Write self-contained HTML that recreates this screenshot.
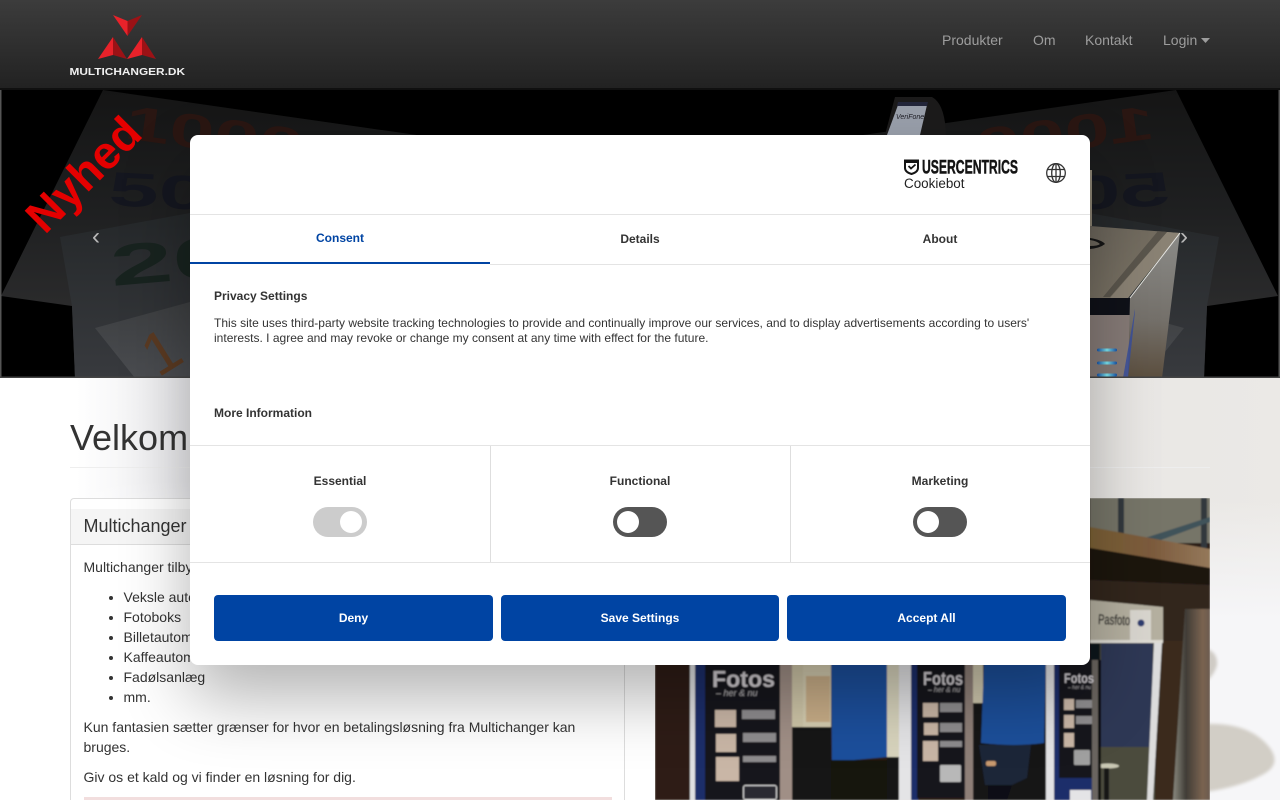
<!DOCTYPE html>
<html lang="da"><head><meta charset="utf-8"><title>Multichanger</title>
<style>
*{box-sizing:border-box}
html,body{margin:0;padding:0;width:1280px;height:800px;overflow:hidden;background:#fff;font-family:"Liberation Sans",sans-serif;color:#333;font-size:14px;line-height:20px}
body{position:relative}
.abs,svg.abs{position:absolute}
#nav{position:absolute;left:0;top:0;width:1280px;height:90px;background:linear-gradient(#3c3c3c,#222);border-bottom:2px solid #101010}
#nav a{position:absolute;top:30px;color:#9d9d9d;text-decoration:none}
.panel{position:absolute;left:70px;top:498px;width:555px;height:302px;background:#fff;border:1px solid #ddd;border-bottom:0;border-radius:4px 4px 0 0;overflow:hidden}
.ph{position:absolute;left:0;top:10px;width:553px;height:36px;background:#f5f5f5;border-bottom:1px solid #ddd;padding:7px 12.5px;font-size:18px;white-space:nowrap}
.pb{position:absolute;left:12.5px;top:58px;width:510px}
.pb p{margin:0 0 10px}.pb ul{margin:0 0 10px;padding-left:40px}
.alert{position:absolute;left:13px;top:298px;width:528px;height:3px;background:#f2dede}
#modal{position:absolute;left:190px;top:135px;width:900px;height:530px;background:#fff;border-radius:8px;box-shadow:0 32px 68px rgba(0,0,0,.3);color:#141414;font-size:12px;line-height:15px;overflow:hidden}
#modal div.h{position:absolute;background:#e4e4e4;height:1px}
#modal div.v{position:absolute;background:#dedede;width:1px}
.tab{position:absolute;top:80px;width:300px;height:49px;text-align:center;line-height:48px;font-weight:bold;color:#333}
.lab{position:absolute;top:339px;width:300px;text-align:center;font-weight:bold;color:#333}
.tg{position:absolute;top:372px;width:54px;height:30px;border-radius:15px;background:#555}
.tg i{position:absolute;top:4px;width:22px;height:22px;border-radius:50%;background:#fff}
.btn{position:absolute;top:460px;height:46px;background:#0044a3;color:#fff;border-radius:4px;text-align:center;line-height:46px;font-weight:bold}
</style></head><body>

<svg class="abs" style="left:0;top:378px" width="1280" height="422" viewBox="0 378 1280 422">
<defs>
<linearGradient id="bg" x1="0" x2="1" y1="0" y2="0"><stop offset="0" stop-color="#fff"/><stop offset=".06" stop-color="#fff"/><stop offset=".15" stop-color="#e9e9ec"/><stop offset=".7" stop-color="#e6e4e2"/><stop offset="1" stop-color="#ebe9e6"/></linearGradient>
<linearGradient id="fl" x1="0" x2="0" y1="0" y2="1"><stop offset="0" stop-color="#fff" stop-opacity="0"/><stop offset=".3" stop-color="#fff"/><stop offset="1" stop-color="#fff"/></linearGradient>
<linearGradient id="fr" x1="0" x2="0" y1="0" y2="1"><stop offset="0" stop-color="#f6f6f8" stop-opacity="0"/><stop offset=".4" stop-color="#f6f6f8"/><stop offset="1" stop-color="#f6f6f8"/></linearGradient>
<filter id="b3" x="-20%" y="-20%" width="140%" height="140%"><feGaussianBlur stdDeviation="1.5"/></filter>
<filter id="b1" x="-5%" y="-5%" width="110%" height="110%"><feGaussianBlur stdDeviation=".7"/></filter>
</defs>
<rect x="0" y="378" width="1280" height="422" fill="url(#bg)"/>
<rect x="0" y="480" width="655" height="320" fill="url(#fl)"/>
<rect x="1210" y="500" width="70" height="300" fill="url(#fr)"/>
<path d="M1205 724Q1250 722 1270 748Q1282 765 1262 775Q1240 787 1205 792Z" fill="#d2cec6" filter="url(#b3)"/>
<path d="M1205 648Q1218 652 1217 665Q1214 676 1205 682Z" fill="#cfcbc5" filter="url(#b3)"/>
</svg>

<div class="abs" style="left:70px;top:411px;width:1140px;height:57px;border-bottom:1px solid #eee;font-size:36px;line-height:54px;white-space:nowrap;overflow:hidden">Velkommen til Multichanger</div>

<div class="panel"><div class="ph">Multichanger tilbyder</div>
<div class="pb"><p>Multichanger tilbyder betalingsløsninger til</p>
<ul><li>Veksle automater</li><li>Fotoboks</li><li>Billetautomater</li><li>Kaffeautomater</li><li>Fadølsanlæg</li><li>mm.</li></ul>
<p>Kun fantasien sætter grænser for hvor en betalingsløsning fra Multichanger kan bruges.</p>
<p style="margin:0">Giv os et kald og vi finder en løsning for dig.</p></div>
<div class="alert"></div></div>

<svg class="abs" style="left:655px;top:498px" width="555" height="302" viewBox="655 498 555 302">
<defs>
<linearGradient id="beam" x1="0" x2="1" y1="0" y2="0"><stop offset="0" stop-color="#7d6236"/><stop offset=".5" stop-color="#7b5a3c"/><stop offset="1" stop-color="#94785a"/></linearGradient>
<linearGradient id="gl" x1="0" x2="1" y1="0" y2="0"><stop offset="0" stop-color="#8a8a80"/><stop offset=".35" stop-color="#403c36"/><stop offset=".8" stop-color="#7a6350"/><stop offset="1" stop-color="#6a5a50"/></linearGradient>
</defs>
<g filter="url(#b1)">
<rect x="655" y="498" width="555" height="302" fill="#2a1f18"/>
<rect x="1090" y="498" width="120" height="45" fill="#767468"/>
<rect x="1118" y="498" width="6" height="36" fill="#30383c"/>
<rect x="1201" y="498" width="6" height="50" fill="#30383c"/>
<path d="M1145 538L1210 517V522L1150 544Z" fill="#41525a"/>
<path d="M1090 527L1210 549V568L1090 548Z" fill="url(#beam)"/>
<path d="M1090 548L1210 568V585L1090 580Z" fill="#1e1511"/>
<path d="M1090 580L1210 585V800H1090Z" fill="#33251c"/>
<path d="M1090 600L1163 607V641L1090 640Z" fill="#b5b0a0"/>
<rect x="1130" y="610" width="21" height="30" fill="#d9d6cf"/>
<circle cx="1141" cy="623" r="3.500" fill="#2f3d70"/>
<text x="1098" y="624" font-size="14" fill="#1a1a1a" stroke="#1a1a1a" stroke-width=".3" transform="rotate(2 1098 624)" textLength="32" lengthAdjust="spacingAndGlyphs">Pasfoto</text>
<rect x="1090" y="640" width="73" height="3" fill="#dedcd4"/>
<rect x="1090" y="643" width="15" height="157" fill="#11131c"/>
<rect x="1100" y="643" width="55" height="157" fill="#4c4b3e"/>
<rect x="1101" y="643" width="52" height="104" fill="#2e3954"/>
<path d="M1154 643H1162L1153 800H1147Z" fill="#dcdcdc"/>
<ellipse cx="1108" cy="766" rx="11" ry="2.500" fill="#c9c8b4"/>
<rect x="1104" y="768" width="5" height="32" fill="#141414"/>
<path d="M1155 800L1163 641H1185L1173 800Z" fill="#3b2b1e"/>
<path d="M1173 800L1185 609H1210V800Z" fill="url(#gl)"/>

<rect x="655" y="660" width="40" height="140" fill="#2e1e14"/>
<rect x="690" y="660" width="5" height="140" fill="#dfe0e2"/>
<rect x="695" y="660" width="12" height="140" fill="#1b2f6a"/>
<rect x="705" y="660" width="76" height="140" fill="#14121a"/>
<rect x="780" y="660" width="12" height="140" fill="#a08f86"/>
<rect x="792" y="660" width="11" height="67" fill="#cfc6a8"/>
<rect x="803" y="660" width="28" height="67" fill="#d5cdb0"/>
<rect x="806" y="676" width="24" height="46" fill="#c9ae88"/>
<rect x="792" y="727" width="39" height="73" fill="#181816"/>
<path d="M831 660H887V757L832 762Z" fill="#1d4f9c"/>
<rect x="831" y="760" width="57" height="40" fill="#121210"/>
<rect x="887" y="660" width="12" height="97" fill="#d8d4bd"/>
<rect x="887" y="757" width="12" height="43" fill="#141412"/>
<rect x="899" y="660" width="12" height="140" fill="#e4e4e6"/>
<rect x="911" y="660" width="7" height="140" fill="#1b2f6a"/>
<rect x="917" y="660" width="48" height="138" fill="#14121a"/>
<rect x="965" y="660" width="8" height="140" fill="#8e7f78"/>
<rect x="973" y="660" width="10" height="43" fill="#cfc8ae"/>
<rect x="973" y="703" width="75" height="97" fill="#131315"/>
<path d="M984 660H1046L1044 743Q1015 747 981 743Z" fill="#1e4f9a"/>
<path d="M979 745H1031L1027 778L1012 785H985Z" fill="#1c2538"/>
<path d="M988 785H1012L1007 800H988Z" fill="#101114"/>
<rect x="986" y="761" width="10" height="5" rx="2" fill="#c89a70"/>
<rect x="1046" y="660" width="10" height="140" fill="#e2e2e4"/>
<rect x="1054" y="660" width="6" height="140" fill="#1b2f6a"/>
<rect x="1059" y="660" width="37" height="118" fill="#14121a"/>
<rect x="1059" y="778" width="37" height="22" fill="#1b2f6a"/>
<rect x="1070" y="790" width="21" height="10" fill="#e4e4e6"/>
<rect x="1092" y="660" width="6" height="140" fill="#6b6560"/>
<rect x="1098" y="660" width="3" height="140" fill="#111"/>

<g fill="#cfcbcf" font-weight="bold">
<text x="712" y="687" font-size="23" textLength="63" lengthAdjust="spacingAndGlyphs">Fotos</text>
<text x="923" y="685" font-size="18" textLength="40" lengthAdjust="spacingAndGlyphs">Fotos</text>
<text x="1064" y="683" font-size="14" textLength="30" lengthAdjust="spacingAndGlyphs">Fotos</text>
</g>
<g fill="#b0aeb0" font-style="italic">
<text x="716" y="696" font-size="9">– her &amp; nu</text>
<text x="928" y="692" font-size="7">– her &amp; nu</text>
<text x="1068" y="689" font-size="5">– her &amp; nu</text>
</g>
<g fill="#c9b6a6">
<rect x="715" y="710" width="21" height="17"/><rect x="716" y="734" width="20" height="18"/><rect x="716" y="757" width="23" height="24"/>
<rect x="923" y="703" width="15" height="14"/><rect x="924" y="723" width="14" height="12"/><rect x="923" y="741" width="15" height="20"/>
<rect x="1064" y="699" width="10" height="11"/><rect x="1064" y="715" width="10" height="13"/><rect x="1064" y="733" width="10" height="14"/>
</g>
<g fill="#8e8c8e">
<rect x="742" y="710" width="33" height="9"/><rect x="743" y="733" width="33" height="9"/><rect x="743" y="756" width="33" height="6"/>
<rect x="940" y="703" width="22" height="9"/><rect x="940" y="723" width="22" height="9"/><rect x="940" y="741" width="22" height="6"/>
<rect x="1076" y="700" width="16" height="8"/><rect x="1076" y="716" width="16" height="8"/>
</g>
<rect x="743.500" y="785.500" width="33" height="14" rx="2" fill="#2a2a30" stroke="#ddd"/>
<rect x="940" y="765" width="21" height="17" rx="1" fill="#b8b8b8"/>
<rect x="1074" y="750" width="16" height="15" rx="1" fill="#a0a0a0"/>
</g>
</svg>

<svg class="abs" style="left:0;top:90px" width="1280" height="288" viewBox="0 90 1280 288">
<defs>
<clipPath id="bc"><rect x="0" y="90" width="1280" height="288"/></clipPath>
<linearGradient id="n1" x1="0" x2="0" y1="90" y2="320" gradientUnits="userSpaceOnUse"><stop offset="0" stop-color="#151515"/><stop offset=".5" stop-color="#1e1f20"/><stop offset="1" stop-color="#2c2c2d"/></linearGradient>
<linearGradient id="n2" x1="0" x2="0" y1="215" y2="378" gradientUnits="userSpaceOnUse"><stop offset="0" stop-color="#25282a"/><stop offset="1" stop-color="#383a3e"/></linearGradient>
<linearGradient id="n3" x1="0" x2="0" y1="300" y2="378" gradientUnits="userSpaceOnUse"><stop offset="0" stop-color="#3c3e40"/><stop offset="1" stop-color="#4a4c50"/></linearGradient>
<linearGradient id="top" x1="0" x2="1" y1="0" y2="1"><stop offset="0" stop-color="#6a645a"/><stop offset="1" stop-color="#807868"/></linearGradient>
<linearGradient id="side" x1="0" x2="0" y1="0" y2="1"><stop offset="0" stop-color="#8b8b88"/><stop offset=".6" stop-color="#74706a"/><stop offset="1" stop-color="#5c4f3f"/></linearGradient>
<linearGradient id="led" x1="0" x2="1" y1="0" y2="0"><stop offset="0" stop-color="#1652a8"/><stop offset=".5" stop-color="#7fe8f0"/><stop offset="1" stop-color="#1652a8"/></linearGradient>
<g id="note">
<path d="M103 90L660 170V378H75L72 306L1 296Z" fill="url(#n1)"/>
<path d="M60 237L190 213L640 378H75L72 306Z" fill="url(#n2)"/>
<path d="M95 328L190 302L340 378H135Z" fill="url(#n3)"/>
<text x="123" y="138" font-size="48" font-weight="bold" fill="#2a1612" transform="rotate(8 123 138)" textLength="180" lengthAdjust="spacingAndGlyphs">1000</text>
<text x="108" y="205" font-size="48" font-weight="bold" fill="#14161f" transform="rotate(3 108 205)" textLength="100" lengthAdjust="spacingAndGlyphs">50</text>
<text x="112" y="286" font-size="58" font-weight="bold" fill="#18231f" transform="rotate(-5 112 286)" textLength="125" lengthAdjust="spacingAndGlyphs">20</text>
<text x="158" y="378" font-size="60" fill="#5a3a22" transform="rotate(-32 158 378)">1</text>
</g>
</defs>
<g clip-path="url(#bc)">
<rect x="0" y="90" width="1280" height="288" fill="#000"/>
<use href="#note"/>
<use href="#note" transform="translate(1279 0) scale(-1 1)"/>
<rect x="1090" y="170" width="2" height="56" fill="#8a8272"/>
<path d="M1090 226L1180 233L1128 298H1090Z" fill="url(#top)"/>
<path d="M1167 232L1180 233L1128 298H1110Z" fill="#8a8274"/>
<path d="M1158 231L1167 232L1110 297H1103Z" fill="#5a554c"/>
<path d="M1090 238Q1102 240 1105 244Q1100 248 1090 249V246Q1098 246 1100 244Q1097 241 1090 240Z" fill="#151515"/>
<path d="M1090 298H1130V315H1090Z" fill="#0f1118"/>
<path d="M1090 315H1130L1128 378H1090Z" fill="#857a76"/>
<path d="M1130 298L1180 233L1162 378H1128Z" fill="url(#side)"/>
<path d="M1130 298L1180 233" stroke="#e8e8e4" stroke-width="1"/>
<path d="M1135 309L1123 378H1128L1135 312Z" fill="#3a4f9c" opacity=".85"/>
<rect x="1097" y="348.500" width="20" height="3" rx="1.500" fill="url(#led)"/>
<rect x="1097" y="361.500" width="20" height="3" rx="1.500" fill="url(#led)"/>
<rect x="1097" y="373.500" width="20" height="3" rx="1.500" fill="url(#led)"/>
<path d="M895 97L932 97Q945 104 946 135H885Z" fill="#1c1b1b"/>
<path d="M898 105H927L920 135H887Z" fill="#9aa0ac"/>
<path d="M898 102H928L927 106H897Z" fill="#23263a"/>
<text x="896" y="119" font-size="7" font-style="italic" fill="#1d1d24">VeriFone</text>
<rect x="0" y="90" width="1.500" height="288" fill="#555"/>
<rect x="1278.500" y="90" width="1.500" height="288" fill="#555"/>
<rect x="0" y="376.500" width="1280" height="1.500" fill="#444"/>
<text x="86" y="177" font-size="46" font-weight="bold" fill="#e40000" text-anchor="middle" dominant-baseline="middle" transform="rotate(-45 86 177)">Nyhed</text>
<text x="96" y="244" font-size="24" fill="#b8b8b8" text-anchor="middle">‹</text>
<text x="1184" y="244" font-size="24" fill="#b8b8b8" text-anchor="middle">›</text>
</g>
</svg>

<div id="nav">
<svg class="abs" style="left:60px;top:10px" width="135" height="70" viewBox="60 10 135 70">
<path d="M113 15L127.500 21V36Z" fill="#e8222a"/><path d="M142 15L127.500 21V36Z" fill="#9b1216"/>
<path d="M113 37V55L98 59Z" fill="#e8222a"/><path d="M113 37L127 59L113 55Z" fill="#9b1216"/>
<path d="M142 37V55L127 59Z" fill="#e8222a"/><path d="M142 37L156 59L142 55Z" fill="#9b1216"/>
<text x="69.500" y="75" font-size="10" font-weight="bold" fill="#f0f0f0" textLength="115.500" lengthAdjust="spacingAndGlyphs">MULTICHANGER.DK</text>
</svg>
<a style="left:942px">Produkter</a><a style="left:1033px">Om</a><a style="left:1085px">Kontakt</a><a style="left:1163px">Login</a>
<svg class="abs" style="left:1201px;top:38px" width="9" height="5" viewBox="0 0 9 5"><path d="M0 0H9L4.500 5Z" fill="#9d9d9d"/></svg>
</div>

<div id="modal">
<svg class="abs" style="left:710px;top:20px" width="175" height="40" viewBox="900 155 175 40">
<path d="M905 160.500H918V168Q918 172 911.500 174Q905 172 905 168Z" fill="none" stroke="#141414" stroke-width="2"/>
<path d="M905 160H918V163H905Z" fill="#141414"/>
<path d="M908.500 166L911 168.500L915.500 164.500" fill="none" stroke="#141414" stroke-width="1.800"/>
<text x="922" y="173.500" font-size="19.500" font-weight="bold" fill="#141414" stroke="#141414" stroke-width=".5" textLength="96" lengthAdjust="spacingAndGlyphs">USERCENTRICS</text>
<text x="904" y="188" font-size="13.500" fill="#222" textLength="60.500" lengthAdjust="spacingAndGlyphs">Cookiebot</text>
<g fill="none" stroke="#333" stroke-width="1.300"><circle cx="1056" cy="173" r="9.300"/><ellipse cx="1056" cy="173" rx="4.300" ry="9.300"/><path d="M1056 163.700V182.300M1047.500 169.500H1064.500M1047.500 176.500H1064.500"/></g>
</svg>
<div class="h" style="left:0;top:79px;width:900px"></div>
<div class="tab" style="left:0;color:#0044a3;line-height:46px">Consent</div>
<div class="tab" style="left:300px">Details</div>
<div class="tab" style="left:600px">About</div>
<div class="abs" style="left:0;top:127px;width:300px;height:2px;background:#0044a3"></div>
<div class="h" style="left:300px;top:129px;width:600px"></div>
<div class="abs" style="left:24px;top:154px;font-weight:bold;color:#333">Privacy Settings</div>
<div class="abs" style="left:24px;top:181px;width:852px;color:#333;letter-spacing:.012px">This site uses third-party website tracking technologies to provide and continually improve our services, and to display advertisements according to users' interests. I agree and may revoke or change my consent at any time with effect for the future.</div>
<div class="abs" style="left:24px;top:271px;font-weight:bold;color:#333">More Information</div>
<div class="h" style="left:0;top:310px;width:900px"></div>
<div class="v" style="left:300px;top:311px;height:116px"></div>
<div class="v" style="left:600px;top:311px;height:116px"></div>
<div class="h" style="left:0;top:427px;width:900px"></div>
<div class="lab" style="left:0">Essential</div><div class="lab" style="left:300px">Functional</div><div class="lab" style="left:600px">Marketing</div>
<div class="tg" style="left:123px;background:#ccc"><i style="left:27px"></i></div>
<div class="tg" style="left:423px"><i style="left:4px"></i></div>
<div class="tg" style="left:723px"><i style="left:4px"></i></div>
<div class="btn" style="left:24px;width:279px">Deny</div>
<div class="btn" style="left:311px;width:278px">Save Settings</div>
<div class="btn" style="left:597px;width:279px">Accept All</div>
</div>
</body></html>
